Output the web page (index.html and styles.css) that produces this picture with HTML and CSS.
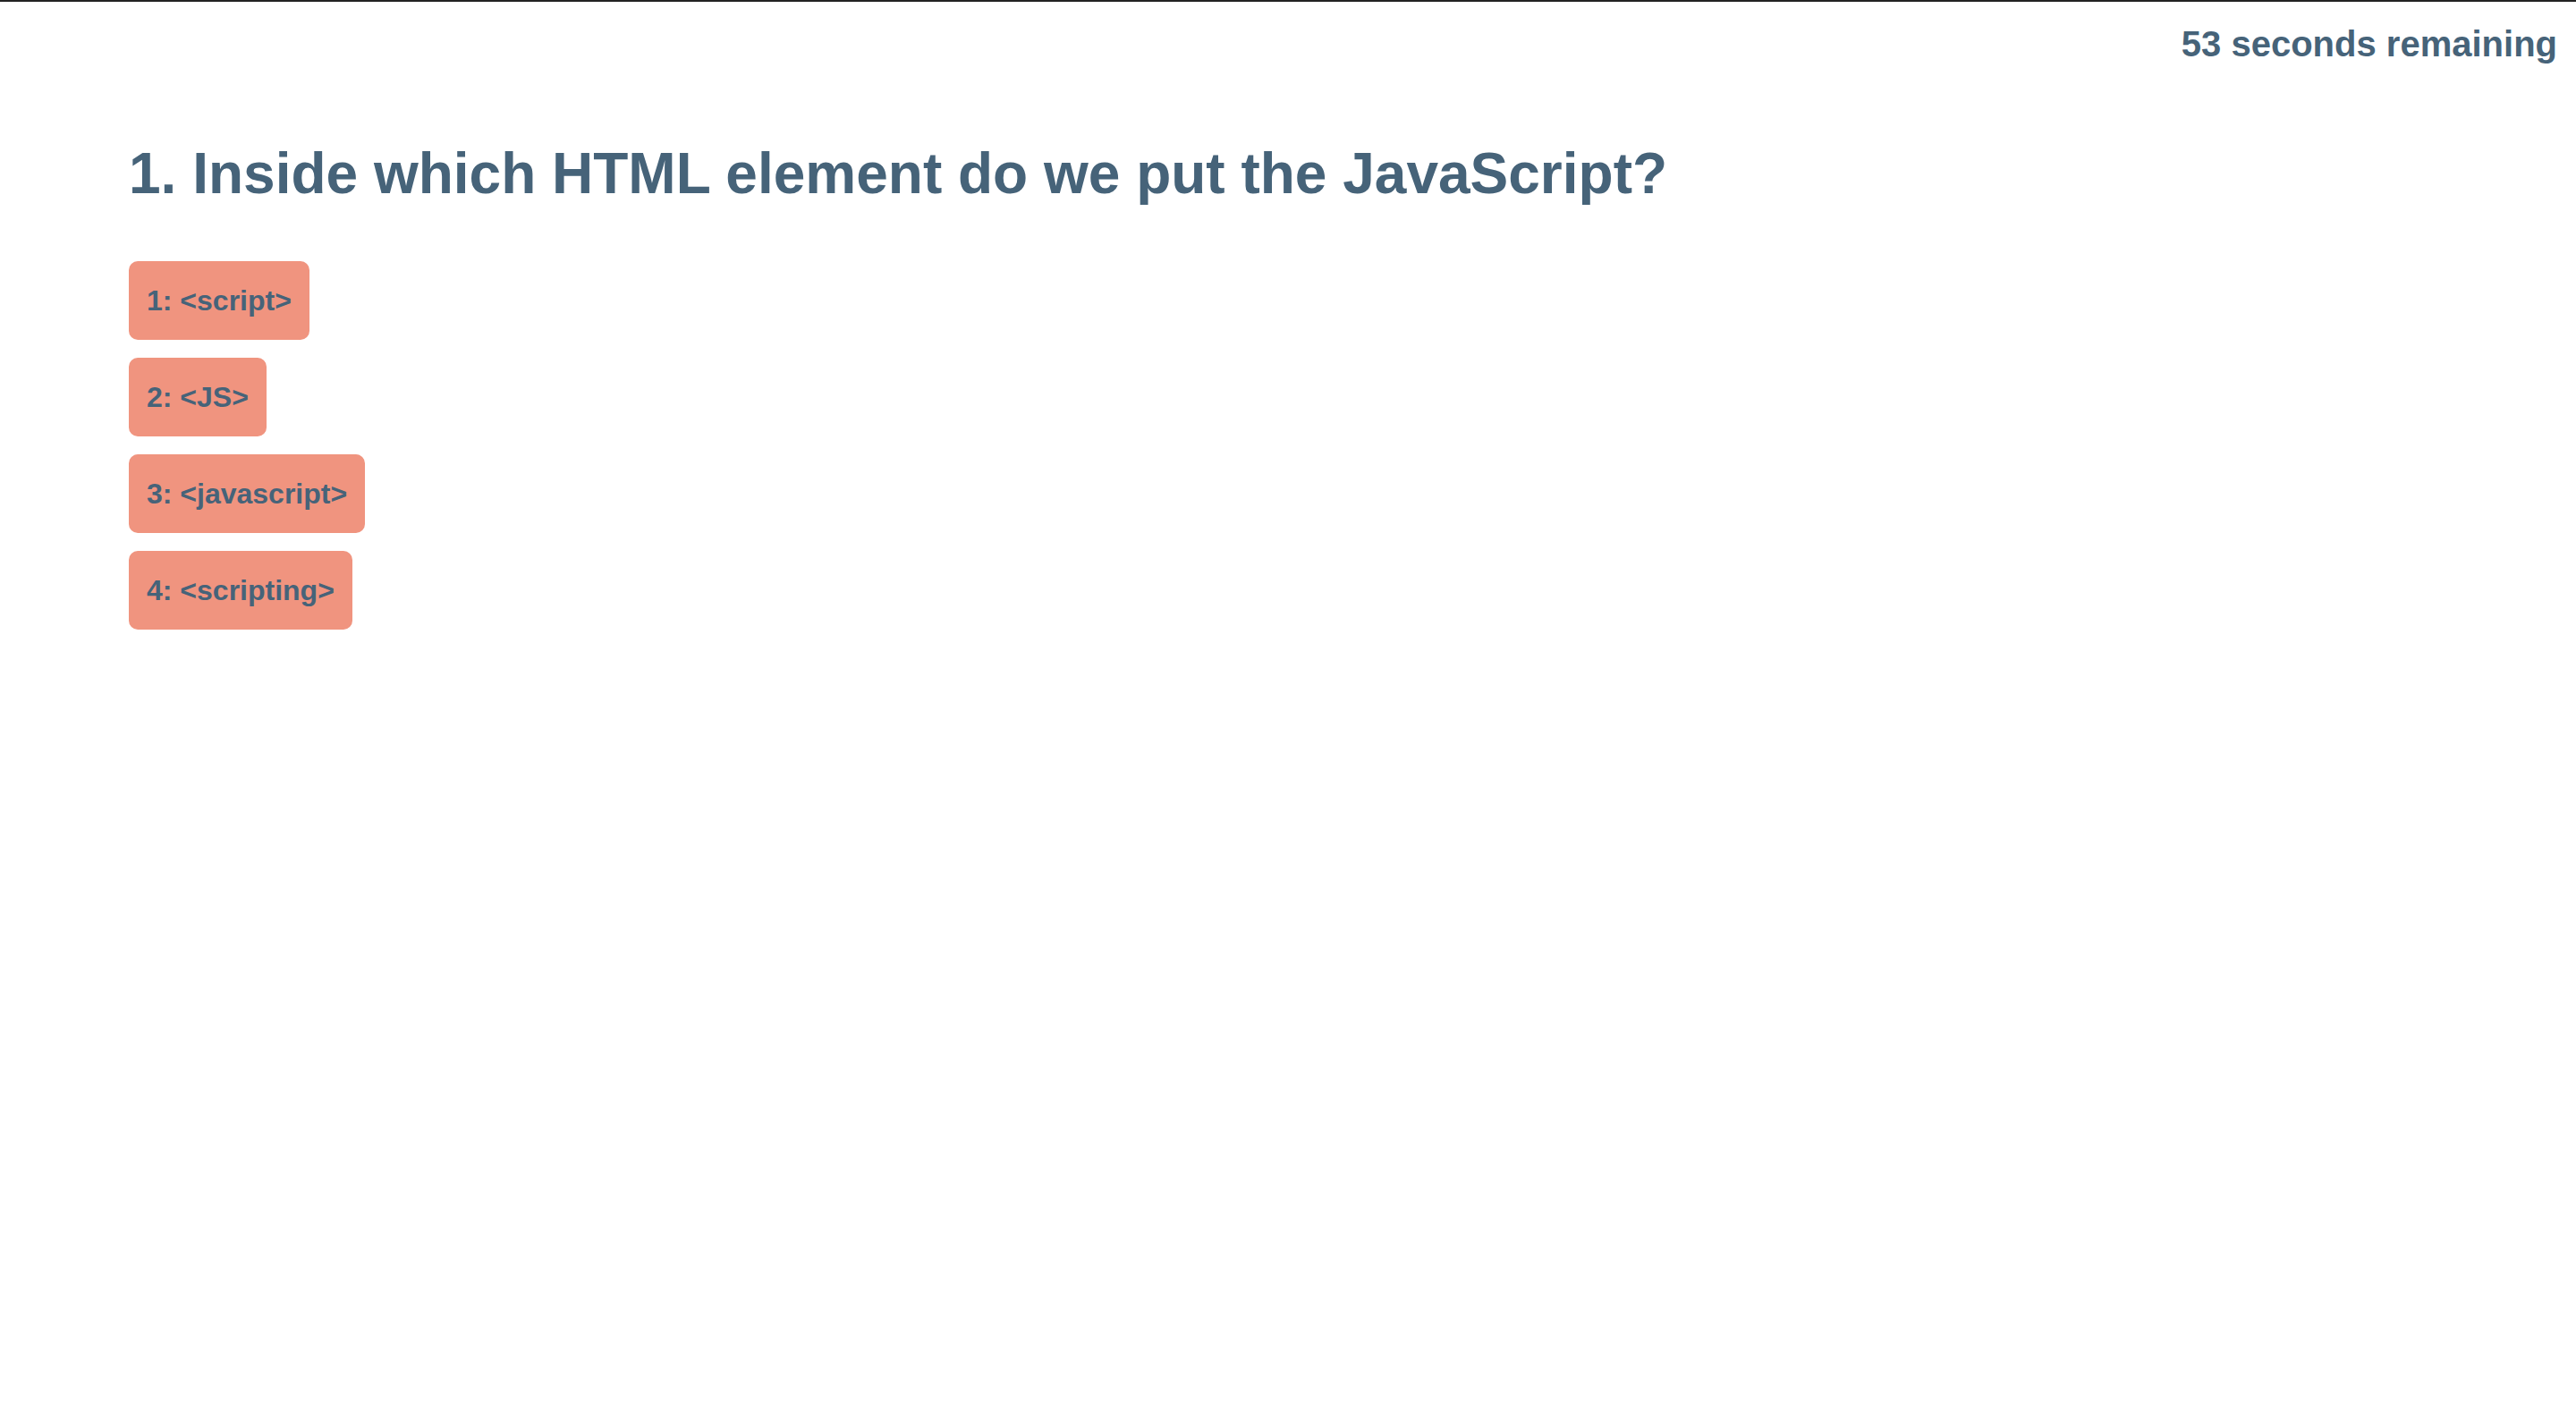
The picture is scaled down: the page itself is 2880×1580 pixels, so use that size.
FILE: index.html
```html
<!DOCTYPE html>
<html>
<head>
<meta charset="utf-8">
<title>Quiz</title>
<link rel="stylesheet" href="styles.css">
</head>
<body>
<header class="topbar">
  <div class="timer">53 seconds remaining</div>
</header>
<main class="quiz">
  <h1 class="question">1. Inside which HTML element do we put the JavaScript?</h1>
  <div class="choices">
    <button class="choice">1: &lt;script&gt;</button>
    <button class="choice">2: &lt;JS&gt;</button>
    <button class="choice">3: &lt;javascript&gt;</button>
    <button class="choice">4: &lt;scripting&gt;</button>
  </div>
</main>
</body>
</html>
```

FILE: styles.css
```css
html, body {
  margin: 0;
  padding: 0;
  background: #ffffff;
}
body {
  border-top: 2px solid #222222;
  font-family: "Liberation Sans", Arial, Helvetica, sans-serif;
  color: #466379;
  font-weight: bold;
}
.topbar {
  display: flex;
  justify-content: flex-end;
  padding: 24px 21px 0 0;
}
.timer {
  font-size: 40px;
  line-height: 46px;
}
.quiz {
  padding: 0 144px;
  display: flex;
  flex-direction: column;
}
.question {
  margin: 86px 0 0 0;
  font-size: 64px;
  line-height: 72px;
  font-weight: bold;
}
.choices {
  margin-top: 62px;
  display: flex;
  flex-direction: column;
  align-items: flex-start;
  gap: 20px;
}
.choice {
  font-family: "Liberation Sans", Arial, Helvetica, sans-serif;
  font-weight: bold;
  font-size: 32px;
  line-height: 40px;
  color: #466379;
  background: #f0947f;
  border: none;
  border-radius: 10px;
  padding: 24px 20px;
  cursor: pointer;
}
```
